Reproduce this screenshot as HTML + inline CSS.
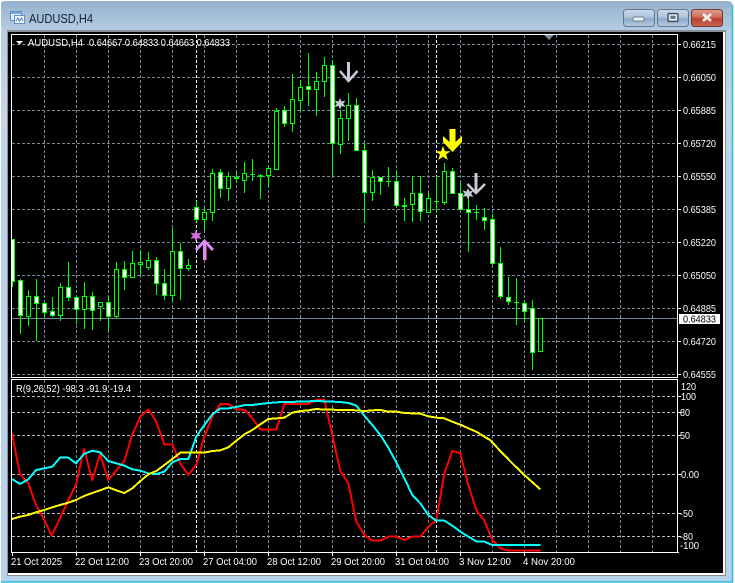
<!DOCTYPE html>
<html><head><meta charset="utf-8"><style>
html,body{margin:0;padding:0;width:735px;height:583px;overflow:hidden;background:#fff}
svg{display:block}
text{font-family:"Liberation Sans",sans-serif;font-size:10.5px;fill:#fff}
.g{fill:none;stroke:#778899;stroke-width:1;stroke-dasharray:3 2}
</style></head><body>
<svg width="735" height="583" viewBox="0 0 735 583" xmlns="http://www.w3.org/2000/svg">
<defs>
<linearGradient id="tb" x1="0" y1="0" x2="0" y2="1"><stop offset="0" stop-color="#97b2ce"/><stop offset=".055" stop-color="#b6cee6"/><stop offset=".2" stop-color="#c6d6e6"/><stop offset=".3" stop-color="#b9d2ea"/><stop offset="1" stop-color="#b8d2ec"/></linearGradient>
<linearGradient id="bt" x1="0" y1="0" x2="0" y2="1"><stop offset="0" stop-color="#c9d9ea"/><stop offset=".45" stop-color="#aec4dc"/><stop offset=".55" stop-color="#8fabc9"/><stop offset="1" stop-color="#b5cbe2"/></linearGradient>
<linearGradient id="cl" x1="0" y1="0" x2="0" y2="1"><stop offset="0" stop-color="#e0a090"/><stop offset=".45" stop-color="#cf6a58"/><stop offset=".55" stop-color="#b83e2c"/><stop offset="1" stop-color="#c96a55"/></linearGradient>
<clipPath id="c1"><rect x="12" y="35" width="665" height="342"/></clipPath>
<clipPath id="c2"><rect x="12" y="380" width="665" height="172"/></clipPath>
</defs>
<!-- window frame -->
<path d="M1 4Q1 1 5 1H728Q732 1 732.5 5V582H1Z" fill="url(#tb)"/>
<path d="M732.5 5V582H1" fill="none" stroke="#22c4dc" stroke-width="1.6"/>
<rect x="7" y="30" width="719" height="546" fill="#8a8f96"/>
<rect x="8" y="32" width="717" height="543" fill="#fff"/>
<rect x="8" y="32" width="715" height="541" fill="#000"/>
<!-- title -->
<g>
<rect x="10.500" y="11.500" width="11" height="9" fill="#e8f1fb" stroke="#5f8fc8"/>
<rect x="14.500" y="15.500" width="10" height="8" fill="#f4f8fd" stroke="#5f8fc8"/>
<rect x="11" y="12" width="10" height="2" fill="#7ea8d8"/>
<path d="M16 21l2-3 1.500 3 2-3 1.500 3" fill="none" stroke="#4d7db8"/>
<text x="29" y="23" style="font-size:12.5px;fill:#15202c" textLength="64" lengthAdjust="spacingAndGlyphs">AUDUSD,H4</text>
</g>
<!-- buttons -->
<rect x="623.500" y="9.500" width="31" height="17" rx="3" fill="url(#bt)" stroke="#62788f"/>
<rect x="633" y="17" width="11" height="4" rx="1" fill="#eef2f6" stroke="#54606c" stroke-width=".7"/>
<rect x="657.500" y="9.500" width="31" height="17" rx="3" fill="url(#bt)" stroke="#62788f"/>
<rect x="668" y="13.500" width="10" height="8" rx="1" fill="none" stroke="#3e4a58" stroke-width="1.200"/><rect x="669" y="14.500" width="8" height="6" fill="#dfe6ee"/><rect x="670.500" y="15.800" width="5" height="3" fill="#66727f"/>
<rect x="691.500" y="9.500" width="31" height="17" rx="3" fill="url(#cl)" stroke="#6d3a34"/>
<path d="M703 14l8 7M711 14l-8 7" stroke="#f4eeea" stroke-width="2.800"/>
<!-- main grid -->
<g clip-path="url(#c1)">
<path class="g" d="M12 44.500H681M12 77.500H681M12 110.500H681M12 143.500H681M12 176.500H681M12 209.500H681M12 242.500H681M12 275.500H681M12 308.500H681M12 341.500H681M12 374.500H681"/>
<path class="g" d="M44.500 35V377M76.500 35V377M108.500 35V377M140.500 35V377M172.500 35V377M204.500 35V377M236.500 35V377M268.500 35V377M300.500 35V377M332.500 35V377M364.500 35V377M396.500 35V377M428.500 35V377M460.500 35V377M492.500 35V377M524.500 35V377M556.500 35V377M588.500 35V377M620.500 35V377M652.500 35V377"/>
<path d="M196.500 35V377M436.500 35V377" fill="none" stroke="#fff" stroke-dasharray="3 2"/>
<path d="M12 318.500H677" stroke="#778899"/>
<!-- wicks -->
<path fill="none" stroke="#0f0" d="M12.500 239V287M20.500 279V334M28.500 290V326M36.500 279V341M44.500 302V317M52.500 297V317M60.500 283V321M68.500 262V301M76.500 295V324M84.500 282V329M92.500 292V330M100.500 302V321M108.500 296V331M116.500 262V318M124.500 261V290M132.500 251V278M140.500 250V275M148.500 252V270M156.500 257V295M164.500 269V300M172.500 228V302M180.500 243V300M188.500 259V271M196.500 201V222M204.500 208V230M212.500 169V221M220.500 169V198M228.500 172V201M236.500 172V183M244.500 162V193M252.500 159V181M260.500 174V199M268.500 165V187M276.500 108V170M284.500 106V127M292.500 74V132M300.500 80V111M308.500 53V106M316.500 72V116M324.500 57V97M332.500 60V175M340.500 110V154M348.500 93V141M356.500 98V151M364.500 143V223M372.500 170V201M380.500 177V195M388.500 167V187M396.500 172V207M404.500 198V221M412.500 176V222M420.500 176V221M428.500 193V213M436.500 176V213M444.500 163V205M452.500 168V193M460.500 183V209M468.500 195V252M476.500 205V220M484.500 208V230M492.500 214V265M500.500 247V299M508.500 277V305M516.500 278V325M524.500 301V323M532.500 300V370M540.500 318V352"/>
<!-- filled bodies -->
<path fill="#fff" stroke="#0f0" d="M10.500 239.500h4V281.500h-4zM18.500 280.500h4V315.500h-4zM34.500 296.500h4V303.500h-4zM42.500 303.500h4V312.500h-4zM50.500 311.500h4V315.500h-4zM66.500 287.500h4V297.500h-4zM74.500 297.500h4V309.500h-4zM90.500 296.500h4V310.500h-4zM106.500 302.500h4V316.500h-4zM122.500 269.500h4V277.500h-4zM154.500 260.500h4V283.500h-4zM162.500 283.500h4V295.500h-4zM178.500 251.500h4V268.500h-4zM194.500 207.500h4V219.500h-4zM218.500 172.500h4V188.500h-4zM282.500 110.500h4V123.500h-4zM306.500 86.500h4V89.500h-4zM330.500 65.500h4V143.500h-4zM354.500 105.500h4V150.500h-4zM362.500 150.500h4V192.500h-4zM378.500 177.500h4V181.500h-4zM394.500 181.500h4V205.500h-4zM418.500 193.500h4V211.500h-4zM450.500 171.500h4V193.500h-4zM458.500 193.500h4V209.500h-4zM466.500 209.500h4V212.500h-4zM482.500 217.500h4V220.500h-4zM490.500 219.500h4V263.500h-4zM498.500 263.500h4V296.500h-4zM506.500 297.500h4V301.500h-4zM522.500 303.500h4V311.500h-4zM530.500 308.500h4V352.500h-4z"/>
<!-- hollow bodies -->
<path fill="#000" stroke="#0f0" d="M26.500 296.500h4V316.500h-4zM58.500 287.500h4V315.500h-4zM82.500 296.500h4V309.500h-4zM98.500 302.500h4V306.500h-4zM114.500 269.500h4V316.500h-4zM130.500 263.500h4V277.500h-4zM138.500 262.500h4V264.500h-4zM146.500 260.500h4V267.500h-4zM170.500 251.500h4V295.500h-4zM186.500 265.500h4V268.500h-4zM202.500 212.500h4V219.500h-4zM210.500 173.500h4V212.500h-4zM226.500 176.500h4V188.500h-4zM242.500 173.500h4V180.500h-4zM266.500 168.500h4V175.500h-4zM274.500 111.500h4V169.500h-4zM290.500 99.500h4V123.500h-4zM298.500 87.500h4V100.500h-4zM314.500 81.500h4V89.500h-4zM322.500 65.500h4V81.500h-4zM338.500 118.500h4V144.500h-4zM346.500 105.500h4V118.500h-4zM370.500 177.500h4V192.500h-4zM410.500 193.500h4V204.500h-4zM426.500 198.500h4V212.500h-4zM442.500 171.500h4V202.500h-4zM538.500 318.500h4V351.500h-4z"/>
<!-- dojis -->
<path fill="none" stroke="#0f0" d="M234 177.500h5M234 178.500h5M250 174.500h5M258 175.500h5M258 176.500h5M386 181.500h5M402 205.500h5M402 206.500h5M434 201.500h5M474 212.500h5M514 302.500h5"/>
<!-- markers -->
<g fill="none" stroke-linejoin="miter">
<path d="M196 250L204.500 241L213 250" stroke="#d98ef5" stroke-width="3"/>
<path d="M204.500 241V260" stroke="#d98ef5" stroke-width="3"/>
<path d="M206.500 246V260" stroke="#a04060" stroke-width="1"/>
<path d="M340 71L348.500 81L357.500 71" stroke="#c9ccd8" stroke-width="2.500"/>
<path d="M348.500 62V81" stroke="#c9ccd8" stroke-width="3"/>
<path d="M467.500 184L476 193L485 184" stroke="#c9ccd8" stroke-width="2.500"/>
<path d="M476 173V193" stroke="#c9ccd8" stroke-width="3"/>
</g>
<path d="M449.500 129h6v13l6.500-6v6L452.500 152l-9.500-10v-6l6.500 6z" fill="#ff0"/>
<path d="M443 146l2 5.200h5.500l-4.400 3.300 1.700 5.500-4.800-3.300-4.800 3.300 1.700-5.500-4.400-3.300h5.500z" fill="#ff0"/>
<path d="M196 230l1.500 3.500 4-1-2.300 3.200 2.300 3.300-4-1-1.500 3.500-1.500-3.500-4 1 2.300-3.300-2.300-3.200 4 1z" fill="#d070e0"/>
<path d="M340 98l1.500 3.500 4-1-2.300 3.200 2.300 3.300-4-1-1.500 3.500-1.500-3.500-4 1 2.300-3.300-2.300-3.200 4 1z" fill="#c9ccd8"/>
<path d="M468 188l1.500 3.500 4-1-2.300 3.200 2.300 3.300-4-1-1.500 3.500-1.500-3.500-4 1 2.300-3.300-2.300-3.200 4 1z" fill="#c9ccd8"/>
</g>
<!-- indicator grid -->
<g clip-path="url(#c2)">
<path class="g" style="stroke:#b4bcc8" d="M12 396.500H681M12 412.500H681M12 435.500H681M12 474.500H681M12 513.500H681M12 536.500H681"/>
<path class="g" d="M44.500 380V552M76.500 380V552M108.500 380V552M140.500 380V552M172.500 380V552M204.500 380V552M236.500 380V552M268.500 380V552M300.500 380V552M332.500 380V552M364.500 380V552M396.500 380V552M428.500 380V552M460.500 380V552M492.500 380V552M524.500 380V552M556.500 380V552M588.500 380V552M620.500 380V552M652.500 380V552"/>
<path d="M196.500 380V552M436.500 380V552" fill="none" stroke="#fff" stroke-dasharray="3 2"/>
<g transform="translate(0 375) scale(.33333)" fill="none" stroke-width="6" stroke-linejoin="round" shape-rendering="crispEdges">
<polyline stroke="#ff0000" points="36,175 60,298 85,325 108,390 133,435 155,482 180,430 205,375 228,330 252,222 277,315 300,237 325,315 350,285 373,258 397,178 421,125 445,103 469,140 493,208 517,208 541,265 565,300 589,268 613,185 637,125 661,87 685,87 709,103 735,105 757,130 781,163 805,163 829,163 853,87 877,87 901,87 925,87 949,75 973,75 997,180 1021,288 1045,325 1069,440 1093,480 1117,497 1141,497 1165,485 1189,485 1213,495 1237,485 1261,485 1285,455 1309,435 1333,295 1357,228 1381,235 1405,330 1429,405 1453,437 1477,495 1501,520 1525,527 1621,527"/>
<polyline stroke="#00ffff" points="36,312 60,327 85,313 108,285 133,280 157,275 180,248 205,248 228,265 252,237 277,227 300,232 325,258 349,265 373,272 397,283 421,287 445,295 469,297 493,290 517,262 541,252 565,252 589,185 613,150 637,118 661,100 685,100 709,96 735,90 757,90 805,84 829,82 853,81 877,81 901,79 925,79 949,78 973,79 997,80 1021,81 1045,84 1069,92 1093,122 1117,150 1141,180 1165,218 1189,262 1213,310 1237,360 1261,385 1285,420 1309,437 1333,437 1357,452 1381,470 1405,485 1429,499 1453,500 1477,510 1621,510"/>
<polyline stroke="#ffff00" points="36,432 60,425 85,420 108,412 133,405 157,397 180,390 205,383 228,375 252,363 277,354 300,346 325,337 349,346 373,354 397,340 421,318 445,298 469,288 493,270 517,252 541,233 565,233 589,233 613,233 637,228 661,226 685,217 709,197 735,177 757,165 781,148 805,132 829,130 853,128 877,113 901,108 925,106 949,102 973,104 997,104 1021,105 1045,105 1069,106 1093,108 1117,106 1141,105 1165,110 1189,110 1213,114 1237,115 1261,116 1285,124 1309,128 1333,130 1357,140 1381,149 1405,160 1429,170 1453,185 1470,195 1500,227 1537,265 1573,300 1621,343"/>
</g>
</g>
<!-- frames -->
<path d="M11.500 34.500H677.500V377.500H11.500Z M11.500 379.500H677.500V552.500H11.500Z" fill="none" stroke="#fff"/>
<path d="M677 44.500h4M677 77.500h4M677 110.500h4M677 143.500h4M677 176.500h4M677 209.500h4M677 242.500h4M677 275.500h4M677 308.500h4M677 341.500h4M677 374.500h4M677 396.500h4M677 412.500h4M677 435.500h4M677 474.500h4M677 513.500h4M677 536.500h4M677 552.500h2M12.500 552v4M76.500 552v4M140.500 552v4M204.500 552v4M268.500 552v4M332.500 552v4M396.500 552v4M460.500 552v4M524.500 552v4" stroke="#fff"/>
<path d="M544 35h10l-5 5z" fill="#778899"/>
<path d="M16 41h7l-3.500 3.500z" fill="#fff"/>
<!-- top labels -->
<text x="28" y="46" textLength="55" lengthAdjust="spacingAndGlyphs">AUDUSD,H4</text>
<text x="89" y="46" textLength="141" lengthAdjust="spacingAndGlyphs">0.64667 0.64833 0.64663 0.64833</text>
<text x="16" y="392" textLength="115" lengthAdjust="spacingAndGlyphs">R(9,26,52) -98.3 -91.9 -19.4</text>
<!-- price axis -->
<g>
<text x="683" y="48" textLength="33" lengthAdjust="spacingAndGlyphs">0.66215</text>
<text x="683" y="81" textLength="33" lengthAdjust="spacingAndGlyphs">0.66050</text>
<text x="683" y="114" textLength="33" lengthAdjust="spacingAndGlyphs">0.65885</text>
<text x="683" y="147" textLength="33" lengthAdjust="spacingAndGlyphs">0.65720</text>
<text x="683" y="180" textLength="33" lengthAdjust="spacingAndGlyphs">0.65550</text>
<text x="683" y="213" textLength="33" lengthAdjust="spacingAndGlyphs">0.65385</text>
<text x="683" y="246" textLength="33" lengthAdjust="spacingAndGlyphs">0.65220</text>
<text x="683" y="279" textLength="33" lengthAdjust="spacingAndGlyphs">0.65050</text>
<text x="683" y="312" textLength="33" lengthAdjust="spacingAndGlyphs">0.64885</text>
<rect x="679" y="314" width="41" height="10" fill="#fff"/>
<text x="683" y="322.500" textLength="33" lengthAdjust="spacingAndGlyphs" style="fill:#000">0.64833</text>
<text x="683" y="345" textLength="33" lengthAdjust="spacingAndGlyphs">0.64720</text>
<text x="683" y="378" textLength="33" lengthAdjust="spacingAndGlyphs">0.64555</text>
<text x="681" y="390" textLength="15" lengthAdjust="spacingAndGlyphs">120</text>
<text x="681" y="400" textLength="15" lengthAdjust="spacingAndGlyphs">100</text>
<text x="680" y="416" textLength="10" lengthAdjust="spacingAndGlyphs">80</text>
<text x="680" y="439" textLength="10" lengthAdjust="spacingAndGlyphs">50</text>
<text x="681" y="478" textLength="18" lengthAdjust="spacingAndGlyphs">0.00</text>
<text x="680" y="517" textLength="13" lengthAdjust="spacingAndGlyphs">-50</text>
<text x="680" y="540" textLength="13" lengthAdjust="spacingAndGlyphs">-80</text>
<text x="680" y="549" textLength="19" lengthAdjust="spacingAndGlyphs">-100</text>
</g>
<!-- time axis -->
<g>
<text x="11" y="565" textLength="51" lengthAdjust="spacingAndGlyphs">21 Oct 2025</text>
<text x="75" y="565" textLength="54" lengthAdjust="spacingAndGlyphs">22 Oct 12:00</text>
<text x="139" y="565" textLength="54" lengthAdjust="spacingAndGlyphs">23 Oct 20:00</text>
<text x="203" y="565" textLength="54" lengthAdjust="spacingAndGlyphs">27 Oct 04:00</text>
<text x="267" y="565" textLength="54" lengthAdjust="spacingAndGlyphs">28 Oct 12:00</text>
<text x="331" y="565" textLength="54" lengthAdjust="spacingAndGlyphs">29 Oct 20:00</text>
<text x="395" y="565" textLength="54" lengthAdjust="spacingAndGlyphs">31 Oct 04:00</text>
<text x="459" y="565" textLength="52" lengthAdjust="spacingAndGlyphs">3 Nov 12:00</text>
<text x="523" y="565" textLength="52" lengthAdjust="spacingAndGlyphs">4 Nov 20:00</text>
</g>
</svg>
</body></html>
